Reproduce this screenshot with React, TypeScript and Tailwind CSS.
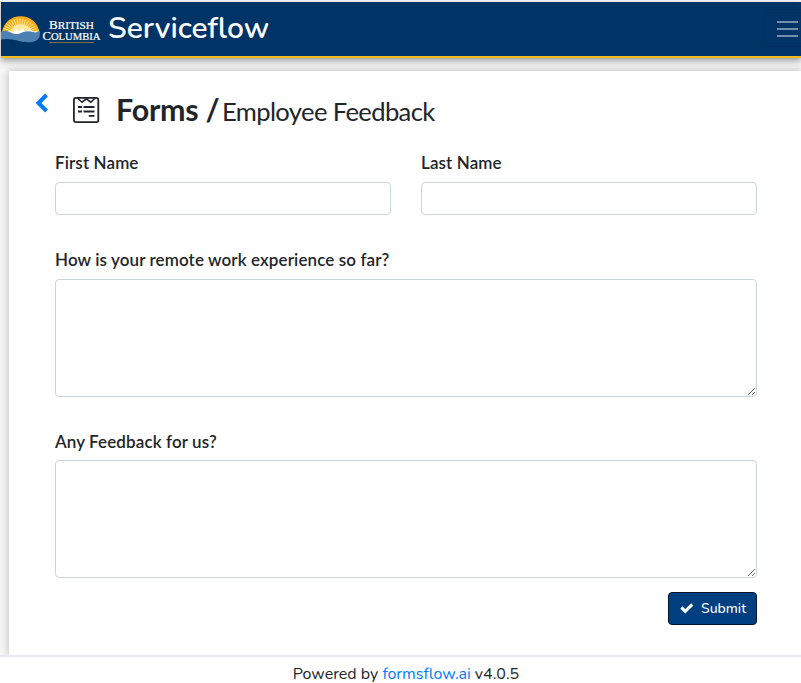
import React from "react";

const rays = Array.from({ length: 17 }, (_, i) => Math.PI * (0.06 + (i * 0.88) / 16));

function Logo() {
  return (
    <svg width="102" height="34" viewBox="0 0 102 34" className="mt-[3px] block shrink-0" aria-hidden="true">
      <path d="M0.5 19C3 8 10 2.2 19.5 2.2S37 8 38.8 19L32 24H5Z" fill="#f5ac16" />
      <g stroke="#ffedb0" strokeWidth="0.9">
        {rays.map((a) => (
          <line key={a} x1={19 - 7 * Math.cos(a)} y1={20 - 6 * Math.sin(a)} x2={19 - 17.5 * Math.cos(a)} y2={20 - 15.5 * Math.sin(a)} />
        ))}
      </g>
      <path d="M9 20C10 13 14 10.5 20 10.5S30 13 31 20Z" fill="#ffe9a0" />
      <path d="M2 20L8 16.5L12 18.5L15 15L18 17.5L21 14.5L25 17.5L29 15.5L33 18L37 16.5L38 21L25 24L8 22Z" fill="#fff" />
      <path d="M0 18C4 15.5 7 17 11 19S17 20 21 18.5S29 17 32 18S36 18 38.6 16.5L38.8 22C37 27 33 28.2 27 28.2C19 28.2 12 24.5 5 25C3 25.2 1 25.5 0 25.5Z" fill="#4d81b3" />
      <g fill="#fff" stroke="#fff" strokeWidth="0.2" fontFamily="'Liberation Serif', serif">
        <text x="48" y="15.4" fontSize="11.5" textLength="45" lengthAdjust="spacingAndGlyphs">B<tspan fontSize="10">RITISH</tspan></text>
        <text x="41.5" y="25.8" fontSize="12.5" textLength="58" lengthAdjust="spacingAndGlyphs">C<tspan fontSize="10.5">OLUMBIA</tspan></text>
      </g>
      <path d="M48 28.5H93" stroke="#7b733d" />
    </svg>
  );
}

function FormIcon() {
  return (
    <svg width="27" height="27" viewBox="0 0 27 27" fill="none" stroke="#212529" className="block shrink-0" aria-hidden="true">
      <rect x="0.9" y="0.9" width="24.4" height="24.2" rx="1.8" strokeWidth="1.8" />
      <path d="M4.5 1L9 5.2L13.4 1.8L17.8 5.2L22.3 1" strokeWidth="1.5" />
      <path d="M5 10H9M10.5 10H21.5M5 14.5H9M10.5 14.5H21.5M15.8 18.9H21.5" strokeWidth="1.8" />
    </svg>
  );
}

const label = "block text-[17px] leading-6 tracking-[0.11px] text-[#212529] font-semibold";
const field = "block w-full rounded-[4px] border border-[#ced4da] bg-white outline-none";

export default function App() {
  return (
    <div className="flex h-[683px] w-[801px] flex-col overflow-hidden bg-[#f5f5f5] font-['Lato',sans-serif] text-[#212529]">
      <header className="relative z-10 mt-[2px] ml-px flex h-[56px] shrink-0 items-center justify-between border-b-2 border-[#fcba19] bg-[#003366] shadow-[0_3px_6px_rgba(0,0,0,0.35)]">
        <div className="flex items-center">
          <Logo />
          <span className="ml-[5px] mb-[1px] whitespace-nowrap font-['Nunito','Lato',sans-serif] text-[30px] leading-10 font-semibold text-white">Serviceflow</span>
        </div>
        <button aria-label="Menu" className="flex h-[35px] w-[38px] shrink-0 flex-col items-start justify-center gap-[5px] rounded-l border border-r-0 border-[#002f60] pl-[13px]">
          <span className="h-[2px] w-[21px] bg-[#758eaa]" />
          <span className="h-[2px] w-[21px] bg-[#758eaa]" />
          <span className="h-[2px] w-[21px] bg-[#758eaa]" />
        </button>
      </header>

      <main className="mt-[13px] ml-[9px] min-h-0 flex-1 bg-white pr-11 pl-[46px] shadow-[0_0_8px_rgba(0,0,0,0.25)]">
        <div className="-ml-5 flex h-[80px] items-center">
          <svg width="14" height="20" viewBox="0 0 14 20" fill="none" className="mb-4 shrink-0" aria-hidden="true">
            <path d="M11.5 2L3.5 10L11.5 18" stroke="#007bff" strokeWidth="4" />
          </svg>
          <div className="mb-[2px] ml-6"><FormIcon /></div>
          <h1 className="mb-[2px] ml-[16px] flex items-baseline whitespace-nowrap leading-10">
            <span className="w-[102px] text-[30.4px] font-bold tracking-[-0.2px]">Forms /</span>
            <span className="ml-[4px] text-[25.6px] tracking-[-0.63px]">Employee Feedback</span>
          </h1>
        </div>

        <form>
          <div className="grid grid-cols-2 gap-[30px]">
            <label className={label}>First Name<input className={field + " mt-[7px] h-[33px]"} /></label>
            <label className={label}>Last Name<input className={field + " mt-[7px] h-[33px]"} /></label>
          </div>
          <label className={label + " mt-[33px]"}>How is your remote work experience so far?<textarea className={field + " mt-[7px] h-[118px] resize-y"} /></label>
          <label className={label + " mt-[33px]"}>Any Feedback for us?<textarea className={field + " mt-[6px] h-[118px] resize-y"} /></label>
          <div className="mt-[14px] flex justify-end">
            <button type="button" className="flex h-[33px] w-[89px] items-center rounded-[4px] border border-[#00152e] bg-[#003f80] pl-[11px] font-['Nunito','Lato',sans-serif] text-[14px] font-medium text-white">
              <svg width="14" height="12" viewBox="0 0 14 12" fill="none" className="mb-px" aria-hidden="true">
                <path d="M1.4 5.5L5.3 9.3L12.3 2.3" stroke="white" strokeWidth="3.2" />
              </svg>
              <span className="ml-[7px]">Submit</span>
            </button>
          </div>
        </form>
      </main>

      <footer className="z-10 flex h-7 shrink-0 items-center justify-center border-t-2 border-[#e9e9ef] bg-white pt-[7px] pl-[11px] font-['Nunito','Lato',sans-serif] text-base leading-6">
        <span className="whitespace-pre">Powered by <a className="text-[#007bff]">formsflow.ai</a> v4.0.5</span>
      </footer>
    </div>
  );
}
